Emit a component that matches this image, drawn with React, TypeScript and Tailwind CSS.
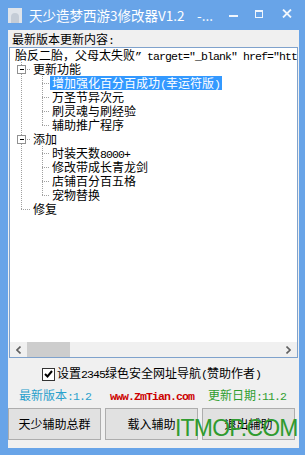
import React from 'react';

// half-width ascii, like SimSun's 6px latin glyphs
const A = ({ children }: { children: React.ReactNode }) => (
  <span className="font-['Liberation_Mono',monospace] text-[11.5px] tracking-[-0.9px]">{children}</span>
);

function TreeLines() {
  const dot = { stroke: '#a0a0a0', strokeDasharray: '1 1', shapeRendering: 'crispEdges' as const };
  const kids1 = [35, 49, 63, 77];
  const kids2 = [105, 119, 133, 147];
  return (
    <svg className="absolute inset-0 pointer-events-none" width="286" height="180">
      <line x1="11.5" y1="14" x2="11.5" y2="161" {...dot} />
      {[21, 91, 161].map(y => (
        <line key={y} x1="11" y1={y + 0.5} x2="21" y2={y + 0.5} {...dot} />
      ))}
      <line x1="32.5" y1="28" x2="32.5" y2="77" {...dot} />
      <line x1="32.5" y1="98" x2="32.5" y2="147" {...dot} />
      {[...kids1, ...kids2].map(y => (
        <line key={y} x1="32" y1={y + 0.5} x2="40" y2={y + 0.5} {...dot} />
      ))}
      {[21, 91].map(y => (
        <g key={y}>
          <rect x="7.5" y={y - 3.5} width="8" height="8" fill="#fff" stroke="#919191" shapeRendering="crispEdges" />
          <line x1="9.5" y1={y + 0.5} x2="14" y2={y + 0.5} stroke="#000" shapeRendering="crispEdges" />
        </g>
      ))}
    </svg>
  );
}

export default function App() {
  return (
    <div className="relative w-[305px] h-[455px] bg-[#68a4e8] flex flex-col overflow-hidden font-['Noto_Sans_CJK_SC',sans-serif] text-black">
      {/* title bar */}
      <div className="h-[30px] flex items-center text-white shrink-0">
        <div className="ml-[8px] w-[14px] h-[15px] shrink-0 bg-[#dfe4ea] flex items-end justify-center">
          <div className="w-[8px] h-[10px] bg-[#c4ccd6] rounded-t-[4px]"></div>
        </div>
        <span className="ml-[7px] text-[13.5px] leading-[20px] whitespace-nowrap w-[168px] shrink-0 min-w-0 overflow-hidden">天少造梦西游3修改器V1.2</span>
        <span className="text-[13.5px] leading-[20px] w-[32px] shrink-0">-...</span>
        <div className="w-[9px] h-[2px] shrink-0 bg-white/90 mt-[2px]"></div>
        <div className="ml-[17px] w-[8px] h-[8px] shrink-0 border border-t-2 border-white/90 mb-[3px]"></div>
        <svg className="ml-[19px] mb-[3px] shrink-0" width="10" height="9" viewBox="0 0 10 9">
          <path d="M1 0.5 L9 8.5 M9 0.5 L1 8.5" stroke="#fff" strokeOpacity="0.9" strokeWidth="1.8" />
        </svg>
      </div>

      {/* body */}
      <div className="ml-[8px] mr-[6px] mb-[7px] flex-1 bg-[#f0f0f0] flex flex-col">
        <div className="pl-[4px] pt-[2px] h-[17px] text-[12px] leading-[14px]">最新版本更新内容<A>:</A></div>

        <div className="ml-[1px] w-[289px] h-[311px] border border-[#7fa2cc] bg-white flex flex-col">
          <div className="relative flex-1 text-[12px] leading-[14px] whitespace-nowrap overflow-hidden">
            <TreeLines />
            <div className="relative">
              <div className="h-[14px] pl-[5px]">胎反二胎，父母太失败<A>” target="_blank" href="http://www.zmtian.com"</A></div>
              <div className="h-[14px] pl-[23px]">更新功能</div>
              <div className="h-[14px] pl-[40px]">
                <span className="bg-[#3399ff] text-white px-[2px] inline-block h-[14px]">增加强化百分百成功<A>(</A>幸运符版<A>)</A></span>
              </div>
              <div className="h-[14px] pl-[42px]">万圣节异次元</div>
              <div className="h-[14px] pl-[42px]">刷灵魂与刷经验</div>
              <div className="h-[14px] pl-[42px]">辅助推广程序</div>
              <div className="h-[14px] pl-[23px]">添加</div>
              <div className="h-[14px] pl-[42px]">时装天数<A>8000+</A></div>
              <div className="h-[14px] pl-[42px]">修改带成长青龙剑</div>
              <div className="h-[14px] pl-[42px]">店铺百分百五格</div>
              <div className="h-[14px] pl-[42px]">宠物替换</div>
              <div className="h-[14px] pl-[23px]">修复</div>
            </div>
          </div>
          {/* horizontal scrollbar */}
          <div className="h-[15px] bg-[#f0f0f0] flex items-center shrink-0">
            <div className="w-[17px] flex justify-center">
              <svg width="5" height="8" viewBox="0 0 5 8"><path d="M4.5 0.5 L1 4 L4.5 7.5" fill="none" stroke="#606060" strokeWidth="1.6" /></svg>
            </div>
            <div className="w-[43px] h-[15px] bg-[#cdcdcd]"></div>
            <div className="flex-1"></div>
            <div className="w-[17px] flex justify-center">
              <svg width="5" height="8" viewBox="0 0 5 8"><path d="M0.5 0.5 L4 4 L0.5 7.5" fill="none" stroke="#606060" strokeWidth="1.6" /></svg>
            </div>
          </div>
        </div>

        <div className="mt-[9px] h-[14px] flex items-center pl-[34px] text-[12px] leading-[14px]">
          <div className="w-[13px] h-[13px] border border-[#333] bg-white flex items-center justify-center">
            <svg width="9" height="8" viewBox="0 0 9 8"><path d="M1 4 L3.5 6.5 L8 1" fill="none" stroke="#000" strokeWidth="2" /></svg>
          </div>
          <span className="ml-[2px] whitespace-nowrap">设置<A>2345</A>绿色安全网址导航<A>(</A>赞助作者<A>)</A></span>
        </div>

        <div className="mt-[8px] h-[14px] flex items-center text-[12px] leading-[14px] whitespace-nowrap">
          <span className="ml-[11px] w-[91px] text-[#2aa0cc]">最新版本<A>:1.2</A></span>
          <span className="w-[98px] text-[#cc0000] font-bold"><A>www.ZmTian.com</A></span>
          <span className="text-[#2f9e2f]">更新日期<A>:11.2</A></span>
        </div>

        <div className="mt-[5px] flex gap-[4px] text-[12px]">
          {['天少辅助总群', '载入辅助', '退出辅助'].map(t => (
            <button key={t} className="w-[93px] h-[32px] bg-[#e1e1e1] border border-[#adadad] flex items-center justify-center">
              {t}
            </button>
          ))}
        </div>
      </div>

      {/* site watermark */}
      <div className="absolute left-[175px] top-[417px] font-['Liberation_Sans',sans-serif] text-[23px] leading-none tracking-[-0.8px] text-[#2f9b2f] pointer-events-none">
        ITMOP.COM
      </div>
    </div>
  );
}
